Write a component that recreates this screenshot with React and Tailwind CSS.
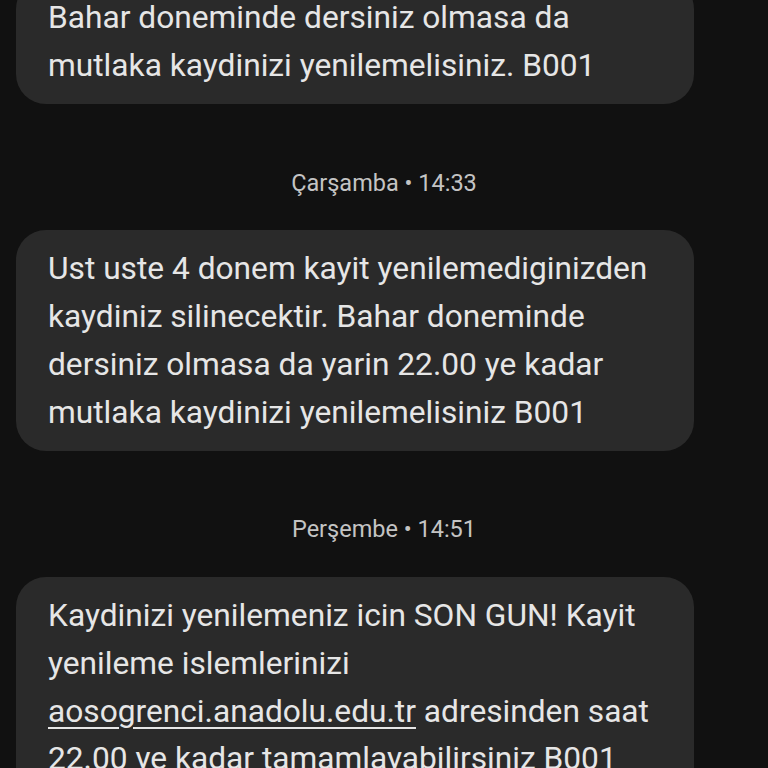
export default function App() {
  const font = { fontFamily: 'Roboto, "Noto Sans", sans-serif' };
  const Bubble = ({ lines }) => (
    <div className="mr-[74px] ml-[16px] rounded-[30px] bg-[#2a2a2a] px-[32px] py-[15px] text-[31.7px] leading-[47.7px] text-[#e6e6e6]">
      {lines.map((l, i) => (
        <div key={i} className="whitespace-nowrap">{l}</div>
      ))}
    </div>
  );
  return (
    <div className="h-[768px] w-[768px] overflow-hidden bg-[#111111]" style={font}>
      <div className="mt-[-21px] flex flex-col">
        <Bubble lines={["Bahar doneminde dersiniz olmasa da", "mutlaka kaydinizi yenilemelisiniz. B001"]} />
        <div className="mt-[65px] mb-[33px] text-center text-[23.5px] leading-[28px] text-[#c4c4c4]">Çarşamba • 14:33</div>
        <Bubble
          lines={[
            "Ust uste 4 donem kayit yenilemediginizden",
            "kaydiniz silinecektir. Bahar doneminde",
            "dersiniz olmasa da yarin 22.00 ye kadar",
            "mutlaka kaydinizi yenilemelisiniz B001",
          ]}
        />
        <div className="mt-[64px] mb-[34px] text-center text-[23.5px] leading-[28px] text-[#c4c4c4]">Perşembe • 14:51</div>
        <Bubble
          lines={[
            "Kaydinizi yenilemeniz icin SON GUN! Kayit",
            "yenileme islemlerinizi",
            <span>
              <span className="underline decoration-[2px] underline-offset-[5px]">aosogrenci.anadolu.edu.tr</span> adresinden saat
            </span>,
            "22.00 ye kadar tamamlayabilirsiniz B001",
          ]}
        />
      </div>
    </div>
  );
}
